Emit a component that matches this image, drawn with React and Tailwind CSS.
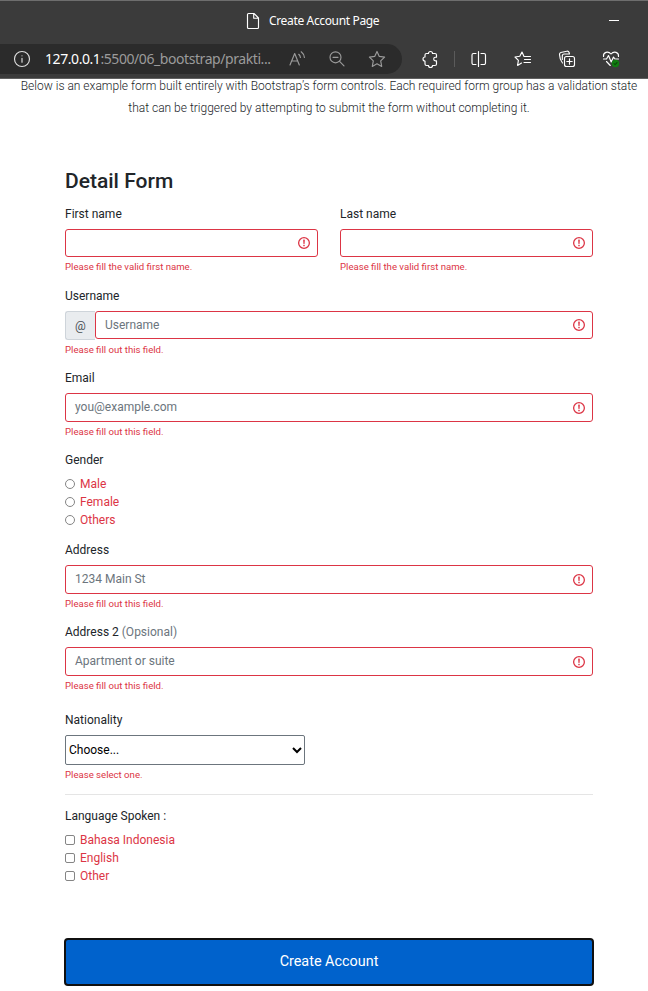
function InvalidIcon() {
  return (
    <svg className="size-[14px] shrink-0" viewBox="0 0 12 12" fill="none" stroke="#dc3545">
      <circle cx="6" cy="6" r="4.6" strokeWidth="1.1" />
      <path strokeLinejoin="round" d="M5.8 3.6h.4L6 6.5z" />
      <circle cx="6" cy="8.2" r=".7" fill="#dc3545" stroke="none" />
    </svg>
  );
}

function Label({ children }) {
  return <div className="mb-1.5 h-[18px] whitespace-pre leading-[18px]">{children}</div>;
}

function Feedback({ children }) {
  return <div className="mt-[3px] h-[14px] text-[9.6px] leading-[14px] text-[#dc3545]">{children}</div>;
}

function Field({ label, placeholder, message, prefix, short }) {
  return (
    <div className="h-[82px] flex-1">
      <Label>{label}</Label>
      <div className={short ? "flex h-[28px]" : "flex h-[29px]"}>
        {prefix && (
          <span className="flex w-[30px] items-center justify-center rounded-l-[3px] border border-r-0 border-[#ced4da] bg-[#e9ecef] text-[#495057]">
            {prefix}
          </span>
        )}
        <div
          className={
            prefix
              ? "flex h-[28px] flex-1 items-center rounded-[3px] border border-[#dc3545] pr-[6px] pl-[9px]"
              : "flex flex-1 items-center rounded-[3px] border border-[#dc3545] pr-[6px] pl-[9px]"
          }
        >
          <span className={prefix ? "flex-1 leading-[18px] text-[#6c757d]" : "flex-1 pb-[2px] leading-[18px] text-[#6c757d]"}>
            {placeholder}
          </span>
          <InvalidIcon />
        </div>
      </div>
      <Feedback>{message}</Feedback>
    </div>
  );
}

function Choice({ round, children }) {
  return (
    <div className="flex h-[18px] items-center text-[#dc3545]">
      <span
        className={
          round
            ? "mr-[5px] mb-px size-[10px] rounded-full border border-[#858585] bg-white"
            : "mr-[5px] size-[10px] rounded-[2px] border border-[#858585] bg-white"
        }
      />
      {children}
    </div>
  );
}

function Glyph({ className, children }) {
  return (
    <svg
      className={className}
      width="20"
      height="20"
      viewBox="0 0 20 20"
      fill="none"
      stroke="currentColor"
      strokeWidth="1.15"
      strokeLinecap="round"
      strokeLinejoin="round"
    >
      {children}
    </svg>
  );
}

function BrowserBar() {
  return (
    <header className="h-[79px] border-t border-b border-t-[#6e6e6e] border-b-[#606060] bg-[#3b3b3b] font-['Noto_Sans','Open_Sans',sans-serif] text-white">
      <div className="flex h-[43px] items-center pt-px pr-[29px]">
        <div className="flex h-full flex-1 items-center pb-[4px] pl-[243px]">
          <Glyph className="mr-[6px]">
            <path d="M5.5 2.5h5.5l4.5 4.5v9.5a1 1 0 0 1-1 1h-9a1 1 0 0 1-1-1v-13a1 1 0 0 1 1-1zM10.7 2.5v4.7h4.8" />
          </Glyph>
          <span className="text-[12px] tracking-[-0.35px]">Create Account Page</span>
        </div>
        <span className="mb-[5px] h-px w-[10px] bg-white" />
      </div>
      <div className="flex h-[30px] items-center">
        <div className="flex h-[30px] w-[402px] items-center rounded-r-full rounded-l-[15px] bg-[#2b2b2b] pl-[12px] text-[#9b9b9b]">
          <Glyph className="mr-[13px] text-[#dedede]">
            <circle cx="10" cy="10" r="7.5" />
            <path d="M10 9.2v4M10 6.7v.1" />
          </Glyph>
          <span className="w-[242px] text-[14px] leading-5 tracking-[-0.43px] whitespace-nowrap">
            <span className="text-white">127.0.0.1</span>:5500/06_bootstrap/prakti...
          </span>
          <Glyph>
            <path d="M3 16 7.7 4.5 12.3 16M4.6 12h6.2M11.7 5.3q1.5 1.3 1.7 3.2M14.2 2.8q2.9 2.2 3.2 5.7" />
          </Glyph>
          <Glyph className="ml-[20px]">
            <circle cx="8.5" cy="8.3" r="5.5" />
            <path d="m12.6 12.4 4.4 4.4M6 8.3h5" />
          </Glyph>
          <Glyph className="ml-[20px]">
            <path d="m10 2.4 2.3 5 5.3.7-3.9 3.8 1 5.5-4.7-2.6-4.7 2.6 1-5.5-3.9-3.8 5.3-.7z" />
          </Glyph>
        </div>
        <Glyph className="ml-[18px]">
          <path d="M6.5 4.5h2a2 2 0 0 1 4 0H15a1.5 1.5 0 0 1 1.5 1.5v2.2h-1a1.8 1.8 0 0 0 0 3.600h1V15a1.500 1.500 0 0 1-1.500 1.500h-2.500a2 2 0 0 1-4 0h-2A1.500 1.500 0 0 1 5 15v-3a2 2 0 0 1 0-4V6a1.500 1.500 0 0 1 1.500-1.500z" />
        </Glyph>
        <span className="ml-[14px] h-4 w-px bg-[#5b5b5b]" />
        <Glyph className="ml-[14px]">
          <path d="M7 4.5H4.500A1.500 1.500 0 0 0 3 6v8a1.500 1.500 0 0 0 1.500 1.500H7M12 4.500h3A1.500 1.500 0 0 1 16.500 6v8a1.500 1.500 0 0 1-1.500 1.500h-3M9.500 2.500v15" />
        </Glyph>
        <Glyph className="ml-[24px]">
          <path d="M11 7.5 9 3 6.800 7.300 2 8l3.400 3.400-.8 5L8.500 14M11 7.500h6.500M11.500 10.500h6M11 13.500h6.500" />
        </Glyph>
        <Glyph className="ml-[24px]">
          <rect x="7.500" y="7.500" width="10" height="10" rx="2" />
          <path d="M12.500 9.800v5.400M9.800 12.500h5.400M5.500 14C3.800 12 2.600 8.500 2.500 5.500a2 2 0 0 1 1.300-2l6-1.300a2 2 0 0 1 2.300 1.300l.4 1.500M5.300 10.500V7a2 2 0 0 1 2-2h5.200" />
        </Glyph>
        <Glyph className="ml-[24px]">
          <path d="M2.500 7.500C2 3.300 7 1.500 10 5c3-3.500 8-1.700 7.500 2.500M2.500 10h3l2-3.500 2.700 6.500 2.300-5 1.500 2h3.500M5.500 12.500l3.800 4" />
          <circle cx="14.500" cy="14.500" r="3.700" fill="#107c10" stroke="none" />
          <path stroke="#0a4a0a" d="m13 14.600 1.100 1.100 2-2.200" />
        </Glyph>
      </div>
    </header>
  );
}

export default function App() {
  return (
    <div className="h-[991px] overflow-hidden bg-white font-[Roboto,sans-serif] text-[12px] text-[#212529]">
      <BrowserBar />
      <p className="-mt-[4px] pl-[10px] text-center text-[12px] leading-[22px] font-light whitespace-nowrap">
        Below is an example form built entirely with Bootstrap’s form controls. Each required form group has a validation state
        <br />
        that can be triggered by attempting to submit the form without completing it.
      </p>
      <main className="ml-[65px] w-[528px] pt-[49px]">
        <h4 className="mb-[11px] h-[26px] text-[21px] leading-[26px] font-medium">Detail Form</h4>
        <div className="flex gap-[22px]">
          <Field short label="First name" message="Please fill the valid first name." />
          <Field short label="Last name" message="Please fill the valid first name." />
        </div>
        <Field label="Username" placeholder="Username" prefix="@" message="Please fill out this field." />
        <Field label="Email" placeholder="you@example.com" message="Please fill out this field." />
        <Label>Gender</Label>
        <div className="mb-3">
          <Choice round>Male</Choice>
          <Choice round>Female</Choice>
          <Choice round>Others</Choice>
        </div>
        <Field label="Address" placeholder="1234 Main St" message="Please fill out this field." />
        <Field
          label={<>Address 2 <span className="text-[#6c757d]">(Opsional)</span></>}
          placeholder="Apartment or suite"
          message="Please fill out this field."
        />
        <div className="pt-[6px]">
          <Label>Nationality</Label>
          <div className="flex h-[30px] w-[240px] items-center justify-between rounded-[2px] border border-[#6c757d] pr-[2px] pl-[3px] text-black">
            Choose...
            <svg width="10" height="8" viewBox="0 0 10 8" fill="none" stroke="black" strokeWidth="2">
              <path d="m1 2 4 4 4-4" />
            </svg>
          </div>
          <Feedback>Please select one.</Feedback>
        </div>
        <hr className="mt-[12px] mb-[12px] border-[#e5e5e5]" />
        <Label>Language Spoken :</Label>
        <Choice>Bahasa Indonesia</Choice>
        <Choice>English</Choice>
        <Choice>Other</Choice>
        <button className="mt-[53px] -ml-px block h-[48px] w-[530px] rounded-[4px] border-2 border-[#101010] bg-[#0062cc] pb-px text-[14.4px] text-white">
          Create Account
        </button>
      </main>
    </div>
  );
}
